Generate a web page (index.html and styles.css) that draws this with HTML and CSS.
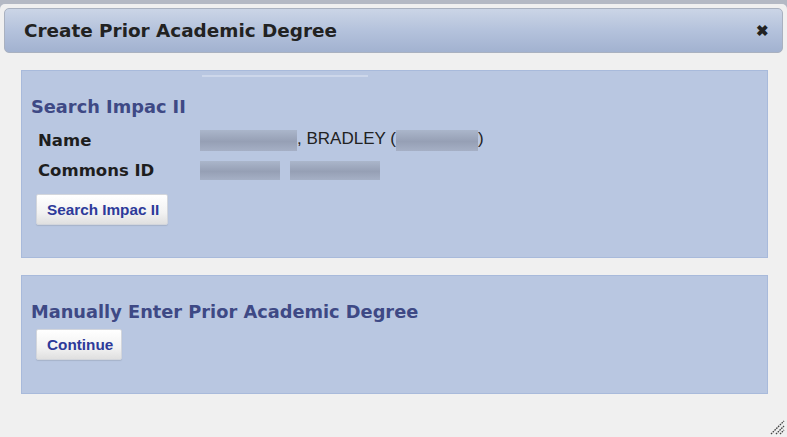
FILE: index.html
```html
<!DOCTYPE html>
<html lang="en">
<head>
    <meta charset="UTF-8">
    <meta name="viewport" content="width=device-width, initial-scale=1.0">
    <title>Create Prior Academic Degree</title>
    <link rel="stylesheet" href="styles.css">
</head>
<body>
    <div class="dialog">
        <div class="titlebar">
            <span class="title">Create Prior Academic Degree</span>
            <span class="close">&#10006;</span>
        </div>

        <div class="content">
            <div class="panel panel-search">
                <div class="panel-line"></div>
                <h2>Search Impac II</h2>
                <table class="info">
                    <tr>
                        <th>Name</th>
                        <td><span class="blur blur-last"></span>, BRADLEY (<span class="blur blur-mid"></span>)</td>
                    </tr>
                    <tr>
                        <th>Commons ID</th>
                        <td><span class="blur blur-id1"></span><span class="blur blur-id2"></span></td>
                    </tr>
                </table>
                <button class="btn">Search Impac II</button>
            </div>

            <div class="panel panel-manual">
                <h2>Manually Enter Prior Academic Degree</h2>
                <button class="btn">Continue</button>
            </div>
        </div>

        <!-- resize handle -->
        <svg class="grip" width="16" height="16" viewBox="0 0 16 16">
            <path d="M2 15 L15 2 M7 15 L15 7 M11 15 L15 11" stroke="#444" stroke-width="1.3" stroke-dasharray="1.6 0.9"/>
        </svg>
    </div>
</body>
</html>
```

FILE: styles.css
```css
body {
    margin: 0;
    background-color: #b4b9c4;
    font-family: "Liberation Sans", Arial, sans-serif;
    height: 437px;
    overflow: hidden;
}

.dialog {
    position: relative;
    margin-top: 4px;
    height: 433px;
    background-color: #f0f0f0;
    border-radius: 5px 5px 0 0;
    padding: 4px 4px 0 4px;
    box-sizing: border-box;
}

.titlebar {
    display: flex;
    justify-content: space-between;
    align-items: center;
    height: 45px;
    padding: 0 13px 0 19px;
    box-sizing: border-box;
    border: 1px solid #a9b1c0;
    border-radius: 5px;
    background: linear-gradient(to bottom, #cbd5e6 0%, #b4c2dc 50%, #a2b2d0 100%);
}

.title {
    font-family: "DejaVu Sans", Verdana, sans-serif;
    font-weight: bold;
    font-size: 18.4px;
    color: #222;
}

.close {
    font-size: 15px;
    color: #222;
    font-weight: bold;
    margin-top: 1px;
}

.content {
    padding: 17px 15px 0 17px;
}

.panel {
    position: relative;
    background-color: #b9c7e1;
    border: 1px solid #a8badb;
    padding: 0 9px;
    box-sizing: border-box;
}

.panel-search {
    height: 188px;
    padding-top: 25px;
}

.panel-manual {
    margin-top: 17px;
    height: 119px;
    padding-top: 25px;
}

.panel-line {
    position: absolute;
    top: 4px;
    left: 180px;
    width: 166px;
    height: 2px;
    background-color: #cdd7ea;
}

.panel h2 {
    margin: 0;
    font-family: "DejaVu Sans", Verdana, sans-serif;
    font-size: 17.8px;
    line-height: 21px;
    font-weight: bold;
    color: #3e4985;
}

.info {
    border-collapse: collapse;
    margin: 8px 0 0 7px;
}

.info th {
    text-align: left;
    font-family: "DejaVu Sans", Verdana, sans-serif;
    font-size: 16.5px;
    font-weight: bold;
    color: #1e1e1e;
    width: 162px;
    padding: 0;
    height: 30px;
}

.info td {
    font-size: 17px;
    color: #222;
    padding: 0;
    white-space: nowrap;
}

.blur {
    display: inline-block;
    height: 21px;
    vertical-align: middle;
    background: linear-gradient(to bottom, #a9b4c8 0%, #929bb0 55%, #a3adc2 100%);
    opacity: 0.9;
}

.blur-last { width: 97px; }
.blur-mid { width: 82px; }
.blur-id1 { width: 80px; height: 19px; }
.blur-id2 { width: 90px; height: 19px; margin-left: 10px; }

.btn {
    display: block;
    margin: 9px 0 0 5px;
    padding: 0 8px 0 10px;
    height: 31px;
    font-family: "Liberation Sans", Arial, sans-serif;
    font-size: 15.3px;
    font-weight: bold;
    color: #2d3a9a;
    background: linear-gradient(to bottom, #ffffff 0%, #f2f2f2 60%, #e0e0e0 100%);
    border: 1px solid #d3d6dc;
    border-radius: 2px;
    box-shadow: 0 1px 1px rgba(0, 0, 0, 0.1);
}

.panel-manual .btn {
    margin-top: 7px;
}

.grip {
    position: absolute;
    right: 2px;
    bottom: 2px;
}
```
